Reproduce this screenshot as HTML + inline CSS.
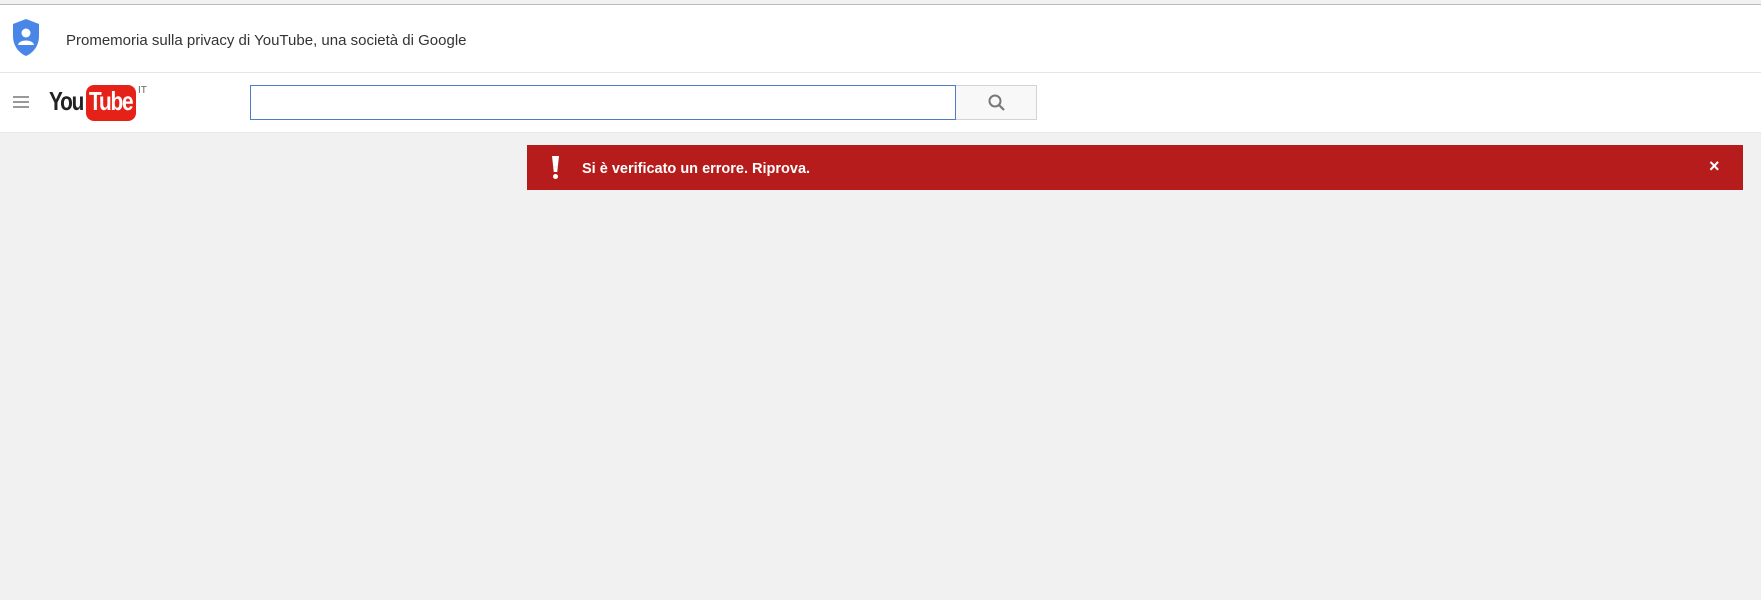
<!DOCTYPE html>
<html><head><meta charset="utf-8"><style>
body{margin:0;width:1761px;height:600px;background:#f1f1f1;font-family:"Liberation Sans",Arial,sans-serif;overflow:hidden;position:relative}
.top{position:absolute;left:0;top:0;width:1761px;height:4px;background:#f1f1f1;border-bottom:1px solid #bbb}
.priv{position:absolute;left:0;top:5px;width:1761px;height:67px;background:#fff;border-bottom:1px solid #e5e5e5}
.mast{position:absolute;left:0;top:73px;width:1761px;height:59px;background:#fff;border-bottom:1px solid #e8e8e8}
.a{position:absolute}
</style></head><body>
<div class="top"></div>
<div class="priv">
<svg class="a" style="left:11px;top:13px" width="30" height="40" viewBox="0 0 30 40"><path d="M15 1 L28 6 V18 C28 28 22 35 15 38 C8 35 2 28 2 18 V6 Z" fill="#4a86e8"/><circle cx="15" cy="15" r="4.5" fill="#fff"/><path d="M7 27 C8 21 22 21 23 27 Z" fill="#fff"/></svg>
<div class="a" style="left:66px;top:27px;font-size:15px;color:#333">Promemoria sulla privacy di YouTube, una società di Google</div>
</div>
<div class="mast">
<div class="a" style="left:13px;top:23px;width:16px;height:2px;background:#999;box-shadow:0 5px 0 #999,0 10px 0 #999"></div>
<div class="a" style="left:49px;top:13px;font-size:26px;font-weight:bold;letter-spacing:-1.5px;color:#222;transform:scaleX(0.8);transform-origin:left">You</div>
<div class="a" style="left:86px;top:12px;width:50px;height:36px;background:#e62117;border-radius:8px"></div>
<div class="a" style="left:89px;top:13px;font-size:26px;font-weight:bold;letter-spacing:-1.5px;color:#fff;transform:scaleX(0.8);transform-origin:left">Tube</div>
<div class="a" style="left:138px;top:12px;font-size:10px;color:#666">IT</div>
<div class="a" style="left:250px;top:12px;width:704px;height:33px;border:1px solid #4d7bc4;background:#fff"></div>
<div class="a" style="left:956px;top:12px;width:80px;height:33px;border:1px solid #d3d3d3;border-left:none;background:#f8f8f8"></div>
<svg class="a" style="left:987px;top:20px" width="20" height="20" viewBox="0 0 20 20"><circle cx="8" cy="8" r="5.5" fill="none" stroke="#777" stroke-width="2"/><path d="M12 12 L17 17" stroke="#777" stroke-width="2.2"/></svg>
</div>
<div class="a" style="left:527px;top:145px;width:1216px;height:45px;background:#b71c1c"></div>
<div class="a" style="left:552px;top:156px;width:7px;height:16px;background:#fff;clip-path:polygon(0 0,100% 0,75% 100%,25% 100%)"></div>
<div class="a" style="left:553px;top:174px;width:5px;height:5px;background:#fff;border-radius:50%"></div>
<div class="a" style="left:582px;top:161px;font-size:14.5px;font-weight:bold;color:#fff">Si è verificato un errore. Riprova.</div>
<div class="a" style="left:1709px;top:156px;font-size:18px;font-weight:bold;color:#fff">×</div>
</body></html>
